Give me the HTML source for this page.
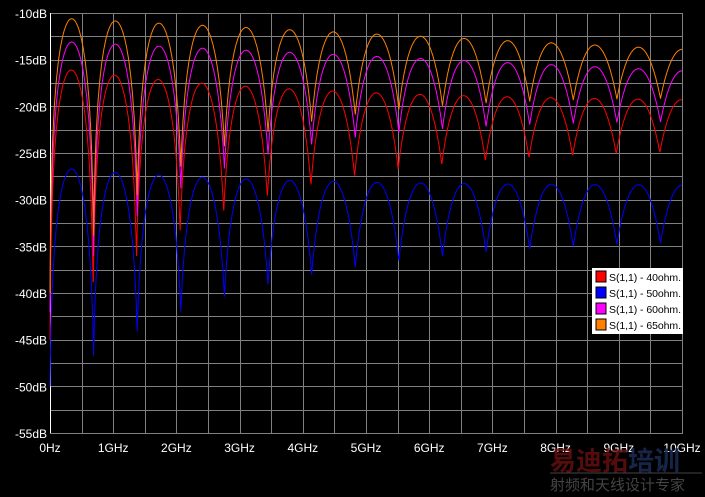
<!DOCTYPE html>
<html><head><meta charset="utf-8"><style>
body{margin:0;background:#000;width:705px;height:492px;overflow:hidden;font-family:"Liberation Sans",sans-serif}
svg text{font-family:"Liberation Sans","Noto Sans CJK SC",sans-serif}
</style></head><body>
<svg id="s" width="705" height="492" xmlns="http://www.w3.org/2000/svg">
<rect width="705" height="492" fill="#000"/>
<g id="grid" stroke="#808080" stroke-width="1"></g>
<line x1="50.5" y1="13" x2="50.5" y2="433" stroke="#fff"/>
<g id="lab" fill="#fff" font-size="12"></g>
<g id="curves" fill="none" stroke-width="1"></g>
<rect x="592" y="268" width="91" height="66" fill="#fff"/>
<g font-size="10.5" fill="#000">
<rect x="596" y="271" width="10" height="11" fill="#f00" stroke="#000"/><text x="609" y="281" textLength="72">S(1,1) - 40ohm.</text>
<rect x="596" y="287" width="10" height="11" fill="#00f" stroke="#000"/><text x="609" y="297" textLength="72">S(1,1) - 50ohm.</text>
<rect x="596" y="303" width="10" height="11" fill="#f0f" stroke="#000"/><text x="609" y="313" textLength="72">S(1,1) - 60ohm.</text>
<rect x="596" y="319" width="10" height="11" fill="#ff8000" stroke="#000"/><text x="609" y="329" textLength="72">S(1,1) - 65ohm.</text>
</g>
<text x="550" y="470" font-size="26" font-weight="bold" fill="#6a1010" opacity="0.8">易迪拓</text>
<text x="628" y="470" font-size="26" font-weight="bold" fill="#1a2a50" opacity="0.9">培训</text>
<line x1="550" y1="473" x2="702" y2="473" stroke="#444"/>
<text x="550" y="490" font-size="15" fill="#444">射频和天线设计专家</text>
</svg>
<script>
var g=document.getElementById('grid'),l=document.getElementById('lab'),c=document.getElementById('curves'),h='',t='';
for(var i=1;i<=20;i++){var x=50+i*31.6;h+='<line x1="'+(Math.round(x)+.5)+'" y1="13" x2="'+(Math.round(x)+.5)+'" y2="433"/>';}
for(var j=0;j<=18;j++){var y=13+j*23.333;h+='<line x1="50" y1="'+(Math.round(y)+.5)+'" x2="683" y2="'+(Math.round(y)+.5)+'"/>';}
g.innerHTML=h;
for(var j=0;j<=9;j++){var y=13+j*46.667;t+='<text x="47" y="'+(y+5)+'" text-anchor="end">'+(-10-5*j)+'dB</text>';}
for(var i=0;i<=10;i++){var x=50+i*63.2;t+='<text x="'+x+'" y="452" text-anchor="middle">'+(i==0?'0Hz':i+'GHz')+'</text>';}
l.innerHTML=t;
function Y(d){return 13+(-10-d)*9.333;}
var P=0.69;
var cs=[
['#f00',function(f){return -15.8-3.8*(1-Math.exp(-f/4));},function(f){return -24.5-20.5*Math.exp(-f/2.5);},-0.05],
['#00f',function(f){return -26.5-2*(1-Math.exp(-f/3));},function(f){return -34-16*Math.exp(-f/3);},0],
['#f0f',function(f){return -13-0.32*f;},function(f){return -21.5-20.5*Math.exp(-f/2);},0],
['#ff8000',function(f){return -10.5-0.34*f;},function(f){return -19-21*Math.exp(-f/2);},0]],o='';
cs.forEach(function(k){var p='';for(var n=0;n<=2000;n++){var f=n/200;var A=Math.pow(10,k[1](f)/20),B=Math.pow(10,k[2](f)/20);var v=B+(A-B)*Math.abs(Math.sin(Math.PI*(f/P)-k[3]*Math.min(f,1)));var d=20*Math.log10(v);p+=(n?'L':'M')+(50+f*63.2).toFixed(1)+' '+Y(d).toFixed(1);}o+='<path d="'+p+'" stroke="'+k[0]+'"/>';});
c.innerHTML=o;
</script>
</body></html>
